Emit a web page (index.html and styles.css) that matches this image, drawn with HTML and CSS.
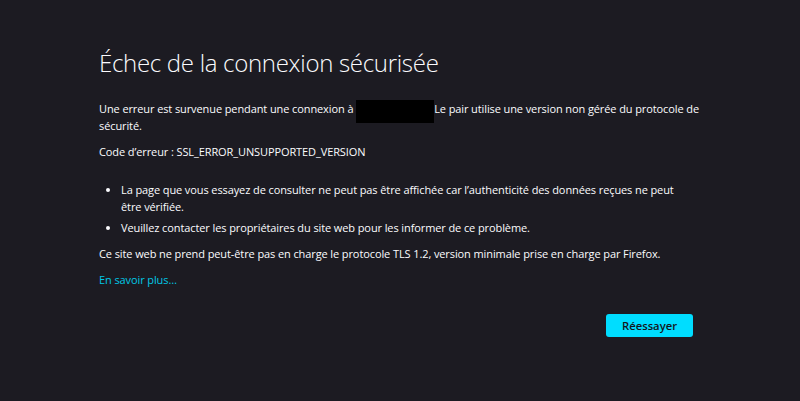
FILE: index.html
```html
<!DOCTYPE html>
<html lang="fr">
<head>
  <meta charset="UTF-8" />
  <meta name="viewport" content="width=device-width, initial-scale=1.0"/>
  <title>Échec de la connexion sécurisée</title>
  <link rel="stylesheet" href="styles.css">
</head>
<body>
  <div class="container">
    <h1 class="title">Échec de la connexion sécurisée</h1>

    <p>Une erreur est survenue pendant une connexion à <span class="hidden-host"></span>Le pair utilise une version non gérée du protocole de sécurité.</p>
    <p>Code d’erreur : SSL_ERROR_UNSUPPORTED_VERSION</p>

    <ul class="reasons">
      <li>La page que vous essayez de consulter ne peut pas être affichée car l’authenticité des données reçues ne peut être vérifiée.</li>
      <li>Veuillez contacter les propriétaires du site web pour les informer de ce problème.</li>
    </ul>

    <p>Ce site web ne prend peut-être pas en charge le protocole TLS 1.2, version minimale prise en charge par Firefox.</p>
    <p><a href="#" class="learn-more">En savoir plus…</a></p>

    <div class="actions">
      <button class="primary" type="button">Réessayer</button>
    </div>
  </div>
</body>
</html>
```

FILE: styles.css
```css
body {
  background-color: #1c1b22;
  color: #fbfbfe;
  font-family: 'Open Sans', 'Noto Sans', sans-serif;
  font-size: 11px;
  letter-spacing: -0.1px;
  line-height: 17px;
  margin: 0;
  padding: 0;
}

.container {
  width: 603px;
  margin-left: 99px;
  padding-top: 46px;
}

.title {
  font-size: 24px;
  font-weight: 300;
  letter-spacing: -0.3px;
  line-height: 34px;
  margin: 0 0 20px;
}

p {
  margin: 0 0 9px;
}

.hidden-host {
  display: inline-block;
  width: 78px;
  height: 23px;
  margin: 0 0 -6px;
  background-color: #000;
  vertical-align: top;
}

.reasons {
  margin: 21px 0 9px;
  padding: 0 8px 0 22px;
}

.reasons li {
  margin-bottom: 4px;
}

.learn-more {
  color: #00c8e6;
  text-decoration: none;
}

.actions {
  display: flex;
  justify-content: flex-end;
  margin-top: 26px;
  margin-right: 9px;
}

.primary {
  width: 87px;
  height: 23px;
  border: none;
  border-radius: 3px;
  background-color: #00ddff;
  color: #15141a;
  font-family: inherit;
  font-size: 11.25px;
  font-weight: 600;
  cursor: pointer;
}
```
